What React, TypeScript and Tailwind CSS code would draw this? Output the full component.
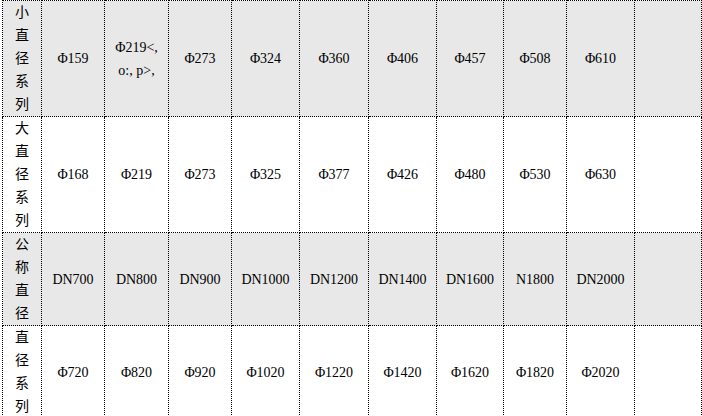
import React from "react";

const rows: { label: string; cells: string[]; gray: boolean; h: string }[] = [
  {
    label: "小直径系列",
    cells: ["Φ159", "Φ219<, o:, p>,", "Φ273", "Φ324", "Φ360", "Φ406", "Φ457", "Φ508", "Φ610", ""],
    gray: true,
    h: "h-[116px]",
  },
  {
    label: "大直径系列",
    cells: ["Φ168", "Φ219", "Φ273", "Φ325", "Φ377", "Φ426", "Φ480", "Φ530", "Φ630", ""],
    gray: false,
    h: "h-[116px]",
  },
  {
    label: "公称直径",
    cells: ["DN700", "DN800", "DN900", "DN1000", "DN1200", "DN1400", "DN1600", "N1800", "DN2000", ""],
    gray: true,
    h: "h-[92px]",
  },
  {
    label: "直径系列",
    cells: ["Φ720", "Φ820", "Φ920", "Φ1020", "Φ1220", "Φ1420", "Φ1620", "Φ1820", "Φ2020", ""],
    gray: false,
    h: "h-[92px]",
  },
];

const widths = [39, 63, 64, 63, 68, 69, 68, 67, 63, 68, 67];

export default function App() {
  return (
    <div className="w-[702px] h-[416px] overflow-hidden bg-white">
      <table
        className="ml-[2px] table-fixed border-collapse border border-dotted border-black text-[14px] leading-[23px] text-black"
        style={{ fontFamily: '"Liberation Serif", "Noto Sans CJK SC", serif', width: 700 }}
      >
        <colgroup>
          {widths.map((w, i) => (
            <col key={i} style={{ width: w }} />
          ))}
        </colgroup>
        <tbody>
          {rows.map((r, ri) => (
            <tr key={ri} className={r.gray ? "bg-[#e8e8e8]" : "bg-white"}>
              <td className={`${r.h} border border-dotted border-black px-[12px] py-0 text-center align-middle break-all`}>
                {r.label}
              </td>
              {r.cells.map((c, ci) => (
                <td
                  key={ci}
                  className={`${r.h} border border-dotted border-black px-[4px] py-0 text-center align-middle`}
                >
                  {c}
                </td>
              ))}
            </tr>
          ))}
        </tbody>
      </table>
    </div>
  );
}
